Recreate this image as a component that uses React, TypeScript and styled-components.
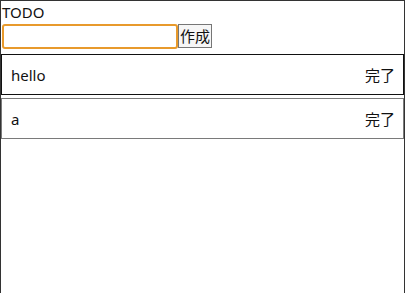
import React, { useState } from "react";
import styled, { createGlobalStyle } from "styled-components";

const Global = createGlobalStyle`
  html, body { margin: 0; padding: 0; background: #fff; }
  body { font-family: "Noto Sans", "Noto Sans CJK JP", sans-serif; color: #111; }
`;

const Page = styled.div`
  border: 1px solid #333;
  min-height: 100vh;
`;

const Title = styled.div`
  font-size: 15px;
  line-height: 22px;
  padding-left: 1px;
`;

const Form = styled.form`
  display: flex;
  align-items: stretch;
  margin: 1px 0 0 1px;
  height: 25px;
`;

const Input = styled.input`
  box-sizing: border-box;
  width: 176px;
  height: 25px;
  border: 2px solid #e89a2c;
  border-radius: 3px;
  padding: 0 4px;
  font: inherit;
  font-size: 15px;
  outline: none;
  background: #fff;
`;

const Button = styled.button`
  box-sizing: border-box;
  height: 24px;
  align-self: flex-end;
  margin-bottom: 1px;
  padding: 0 1px;
  border: 1px solid #767676;
  border-radius: 0;
  background: #f6f6f6;
  font-family: "Noto Sans CJK JP", sans-serif;
  font-size: 15px;
  line-height: 20px;
  color: #111;
`;

const List = styled.div`
  display: flex;
  flex-direction: column;
  gap: 3px;
  margin-top: 5px;
`;

const Item = styled.div<{ $dim?: boolean }>`
  box-sizing: border-box;
  height: 41px;
  display: flex;
  align-items: center;
  justify-content: space-between;
  padding: 0 8px 0 9px;
  border: 1px solid ${(p) => (p.$dim ? "#7a7a7a" : "#111")};
  font-size: 15px;
`;

const Done = styled.span`
  font-family: "Noto Sans CJK JP", sans-serif;
  font-size: 15px;
  cursor: pointer;
`;

export default function App() {
  const [todos] = useState(["hello", "a"]);
  return (
    <Page>
      <Global />
      <Title>TODO</Title>
      <Form onSubmit={(e) => e.preventDefault()}>
        <Input />
        <Button type="submit">作成</Button>
      </Form>
      <List>
        {todos.map((t, i) => (
          <Item key={t} $dim={i > 0}>
            <span>{t}</span>
            <Done>完了</Done>
          </Item>
        ))}
      </List>
    </Page>
  );
}
